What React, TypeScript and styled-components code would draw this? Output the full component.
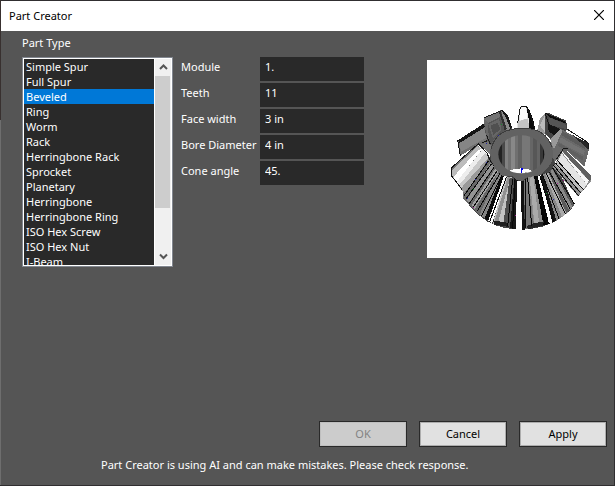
import React, { useRef, useState } from "react";
import styled, { createGlobalStyle } from "styled-components";

const GlobalStyle = createGlobalStyle`
  *, *::before, *::after { box-sizing: border-box; }
  body {
    margin: 0;
    font: 11px/15px "Noto Sans", "Open Sans", sans-serif;
    color: #fff;
    background: #333;
  }
  button, input, select { font: inherit; border-radius: 0; }
`;

const Desktop = styled.div`
  min-height: 100vh;
  display: flex;
  padding: 1px;
  background: linear-gradient(#38302f 120px, #6e6e6e 120px, #6e6e6e calc(100% - 1px), #2b2b2b calc(100% - 1px)) left / 1px 100% no-repeat, #302e30;
`;

const Window = styled.main`
  flex: 1;
  display: flex;
  flex-direction: column;
  background: #555;
`;

const TitleBar = styled.header`
  height: 30px;
  display: flex;
  align-items: center;
  justify-content: space-between;
  padding-left: 8px;
  background: #fff;
  color: #000;
`;

const Title = styled.h1`
  margin: 0;
  padding-bottom: 2px;
  font-size: 11px;
  font-weight: 400;
`;

const CloseButton = styled.button`
  width: 30px;
  height: 30px;
  display: grid;
  place-items: center;
  padding: 0 0 2px;
  border: 0;
  background: transparent;
`;

const Content = styled.section`
  flex: 1;
  display: flex;
  align-items: flex-start;
  gap: 8px;
  padding: 4px 0 0 21px;
`;

const TypePanel = styled.div`
  width: 151px;
  display: grid;
  gap: 7px;
`;

const ListFrame = styled.div`
  height: 210px;
  display: grid;
  grid-template-columns: 1fr 16px;
  column-gap: 1px;
  padding: 1px;
  border: 1px solid #828790;
  background: #fff;
`;

const TypeList = styled.select`
  width: 100%;
  height: 206px;
  padding: 0;
  border: 0;
  outline: 0;
  overflow-y: auto;
  scrollbar-width: none;
  background: #292929;
  color: #fff;
`;

const TypeOption = styled.option`
  height: 15px;
  min-height: 15px;
  padding: 0 2px;
  line-height: 15px;
  color: #fff;

  &:checked {
    background: #0078d7 linear-gradient(#0078d7, #0078d7);
    color: #fff;
  }
`;

const ScrollBar = styled.div`
  display: flex;
  flex-direction: column;
  background: #f0f0f0;
`;

const ScrollTrack = styled.div`
  flex: 1;
`;

const ScrollThumb = styled.div`
  width: 15px;
  height: 77%;
  background: #cdcdcd;
`;

const ScrollButton = styled.button`
  height: 17px;
  display: grid;
  place-items: center;
  padding: 0;
  border: 0;
  background: #f0f0f0;
`;

const Fields = styled.div`
  display: grid;
  grid-template-columns: 79px 104px;
  row-gap: 2px;
  margin-top: 22px;
`;

const FieldLabel = styled.label`
  padding-top: 2px;
  white-space: nowrap;
`;

const FieldInput = styled.input`
  width: 100%;
  height: 24px;
  padding: 0 5px 5px;
  border: 0;
  outline: 0;
  background: #292929;
  color: #fff;
`;

const Preview = styled.figure`
  flex: 0 0 187px;
  height: 198px;
  margin: 25px 0 0 auto;
  background: #fff;

  svg { display: block; }
`;

const Footer = styled.footer`
  display: grid;
  gap: 10px;
  padding-bottom: 13px;
`;

const Actions = styled.div`
  display: flex;
  justify-content: flex-end;
  gap: 12px;
  padding-right: 7px;
`;

const ActionButton = styled.button`
  width: 88px;
  height: 26px;
  padding: 0 0 1px;
  border: 1px solid #292929;
  background: #e1e1e1;
  box-shadow: inset 0 0 0 1px #adadad;
  color: #000;

  &:disabled {
    background: #ccc;
    box-shadow: inset 0 0 0 1px #bfbfbf;
    color: #838383;
  }
`;

const Notice = styled.p`
  margin: 0;
  padding-left: 100px;
`;

const partTypes = [
  "Simple Spur", "Full Spur", "Beveled", "Ring", "Worm", "Rack", "Herringbone Rack",
  "Sprocket", "Planetary", "Herringbone", "Herringbone Ring", "ISO Hex Screw",
  "ISO Hex Nut", "I-Beam", "Channel", "Angle", "Tube",
];

const fields = [
  { id: "module", label: "Module", value: "1." },
  { id: "teeth", label: "Teeth", value: "11" },
  { id: "face-width", label: "Face width", value: "3 in" },
  { id: "bore-diameter", label: "Bore Diameter", value: "4 in" },
  { id: "cone-angle", label: "Cone angle", value: "45." },
];

type Facet = [points: string, fill: string];

const backTeeth: Facet[] = [
  ["98,258 178,207 200,262 196,300 160,264 106,302", "#777"],
  ["103,262 177,218 184,248 108,290", "#858585"],
  ["98,256 178,205 179,217 104,264", "#151515"],
  ["106,302 108,292 160,262 190,254 192,262 164,268", "#707070"],
  ["176,188 230,165 246,178 262,222 225,244 198,272 187,256 180,228", "#555"],
  ["176,190 226,170 230,184 189,204 184,240", "#737373"],
  ["176,190 189,204 192,262 184,240", "#686868"],
  ["190,208 222,192 230,226 204,250", "#666"],
  ["196,213 217,203 226,222 206,240", "#505050"],
  ["229,168 240,172 258,222 242,226", "#8c8c8c"],
  ["228,166 233,164 250,188 261,220 256,221 240,182", "#181818"],
  ["222,172 228,172 246,222 239,225", "#303030"],
  ["277,208 284,163 290,153 305,153 316,180 318,222 276,224", "#e4e4e4"],
  ["286,164 292,155 303,156 307,190 284,197", "#fafafa"],
  ["280,199 307,191 315,221 278,223", "#c4c4c4"],
  ["303,153 314,166 327,202 330,223 313,221 311,190", "#090909"],
  ["337,226 344,192 362,174 371,182 372,244", "#999"],
  ["344,211 361,180 366,182 360,232", "#bbb"],
  ["361,173 371,174 424,197 426,226 408,232 384,260 360,236", "#454545"],
  ["364,175 421,199 422,205 373,187", "#0c0c0c"],
  ["371,187 421,207 424,222 374,210", "#555"],
  ["369,208 410,225 394,244 371,230", "#141414"],
  ["408,222 489,266 492,284 478,334 417,280 384,330 378,262", "#696969"],
  ["406,222 413,225 387,284 375,252", "#999"],
  ["412,229 484,272 479,282 408,240", "#5b5b5b"],
  ["407,247 480,288 476,300 401,261", "#737373"],
  ["401,263 476,306 472,316 400,273", "#606060"],
  ["443,240 488,264 491,283 483,278", "#262626"],
];

const frontFacets: Facet[] = [
  ["157,268 205,335 116,433 112,403 78,361 78,338", "#777"],
  ["158,274 172,281 88,378 80,362 83,343", "#bcbcbc"],
  ["160,284 171,283 94,382 85,366", "#fff"],
  ["172,283 182,294 103,399 94,382", "#ededed"],
  ["182,292 190,310 108,405 102,391", "#c8c8c8"],
  ["189,309 197,322 117,414 107,401", "#999"],
  ["190,312 240,363 169,485 115,430", "#686868"],
  ["196,324 206,335 132,444 125,435", "#949494"],
  ["211,341 220,350 149,462 140,451", "#a0a0a0"],
  ["218,355 234,365 180,490 164,479", "#858585"],
  ["230,361 239,363 191,498 179,490", "#0b0b0b"],
  ["237,363 246,365 202,504 190,497", "#fff"],
  ["243,364 268,369 252,516 203,506", "#c2c2c2"],
  ["248,367 256,367 218,508 207,505", "#909090"],
  ["254,369 269,370 263,520 234,514", "#4c4c4c"],
  ["268,370 280,377 277,524 255,519", "#171717"],
  ["275,378 291,378 291,524 274,523", "#fff"],
  ["287,377 297,378 299,524 291,524", "#111"],
  ["297,377 308,369 334,516 300,522", "#777"],
  ["308,367 331,360 364,508 328,518", "#8d8d8d"],
  ["314,369 325,365 343,510 329,512", "#aaa"],
  ["327,363 339,361 374,506 356,512", "#050505"],
  ["338,364 347,361 384,502 372,506", "#fff"],
  ["346,362 354,359 396,496 382,502", "#131313"],
  ["353,358 368,353 421,479 394,497", "#888"],
  ["361,358 371,353 428,473 411,487", "#aaa"],
  ["370,351 383,338 449,450 424,475", "#5a5a5a"],
  ["376,348 382,342 442,455 432,466", "#8a8a8a"],
  ["384,337 415,280 498,361 498,379 459,424", "#909090"],
  ["399,317 410,295 486,389 475,402", "#e4e4e4"],
  ["411,292 418,294 491,377 486,389", "#f7f7f7"],
  ["390,327 398,315 475,402 467,410", "#bcbcbc"],
  ["414,278 498,361 496,380 416,295", "#606060"],
  ["204,496 247,503 252,516 208,509", "#202020"],
  ["305,514 324,505 357,499 352,513 310,522", "#242424"],
];

const outerEdges = [
  "M98 256 106 302M100 258 178 207M177 188 232 166 248 184 260 218M184 239 196 268M187 257 171 264",
  "M160 266 80 338 80 363 111 403M160 266 186 294 196 318 228 357",
  "M395 312 416 280 428 280M426 222 489 263 490 281M361 175 371 208 406 224",
  "M278 203 286 157 291 153 304 153 317 181 328 218",
];

const toothEdges = [
  "M191 317 117 422M199 327 122 433M207 337 133 446M216 348 145 456M225 356 156 469M231 360 170 482M245 365 194 500",
  "M263 371 248 514M270 374 263 520M301 373 302 520M308 369 320 512",
  "M333 363 365 506M344 360 386 500M352 358 402 491M363 354 421 476M373 350 435 461M383 339 448 447",
  "M385 330 461 423M391 323 467 414M396 315 476 405",
];

const boreStripes: Facet[] = [
  ["219,238 230,238 230,360 219,360", "#222"],
  ["230,238 239,238 239,360 230,360", "#494949"],
  ["239,238 249,238 249,360 239,360", "#818181"],
  ["249,238 259,238 259,360 249,360", "#707070"],
  ["259,238 270,238 270,360 259,360", "#888"],
  ["270,238 280,238 280,360 270,360", "#707070"],
  ["280,238 291,238 291,360 280,360", "#626262"],
  ["291,238 315,238 315,360 291,360", "#777"],
  ["315,238 323,238 323,360 315,360", "#666"],
  ["323,238 335,238 335,360 323,360", "#575757"],
  ["335,238 345,238 345,360 335,360", "#646464"],
  ["345,238 353,238 353,360 345,360", "#383838"],
  ["353,238 359,238 359,360 353,360", "#151515"],
];

const FacetGroup = ({ items }: { items: Facet[] }) => (
  <>{items.map(([points, fill]) => <polygon key={points} points={points} fill={fill} />)}</>
);

const BevelGear = () => (
  <svg width="187" height="198" viewBox="6 15 561 594" role="img" aria-label="Bevel gear preview" shapeRendering="crispEdges">
    <defs>
      <clipPath id="gear-hole"><ellipse cx="289" cy="298" rx="69" ry="57" /></clipPath>
    </defs>
    <FacetGroup items={backTeeth} />
    <path d="M113 425C140 465 175 500 215 512C260 527 310 527 355 514C400 500 430 475 449 450L384 310 197 300Z" fill="#444" />
    <FacetGroup items={frontFacets} />
    {outerEdges.map((d) => <path key={d} d={d} fill="none" stroke="#161616" strokeWidth="3" />)}
    {toothEdges.map((d) => <path key={d} d={d} fill="none" stroke="#090909" strokeWidth="3" />)}
    <path d="M196 300C189 250 230 219 290 220S384 251 384 302C382 327 366 345 344 361L325 364 305 368 291 378 273 374 263 364 238 364C216 352 198 329 196 300Z" fill="#626262" />
    <path d="M199 282C207 241 240 221 290 220S368 238 380 275" fill="none" stroke="#3c3c3c" strokeWidth="3" />
    <g clipPath="url(#gear-hole)">
      <FacetGroup items={boreStripes} />
      <path d="M247 350Q288 330 329 350L320 360H255Z" fill="#fff" />
      <path d="M261 350h8v5h-8zM299 350h8v5h-8z" fill="#aaa" />
    </g>
    <path d="M288 338h5v7h-2v10h-3z" fill="#0000e6" />
    <path d="M183 265h3v3h-3zM182 321h3v3h-3zM150 372h3v3h-3zM126 430h3v3h-3zM384 432h3v3h-3zM220 239h3v3h-3z" fill="#22229d" />
    <path d="M229 207h3v3h-3zM145 403h3v3h-3zM364 415h3v3h-3z" fill="#168b2b" />
    <path d="M144 456h3v3h-3zM269 481h3v3h-3zM397 383h3v3h-3zM413 374h3v3h-3z" fill="#a0208f" />
  </svg>
);

const Chevron = ({ up = false }: { up?: boolean }) => (
  <svg width="9" height="7" viewBox="0 0 9 7" aria-hidden="true">
    <path d={up ? "M1 5 4.5 1.5 8 5" : "M1 1.5 4.5 5 8 1.5"} fill="none" stroke="#555" strokeWidth="2" />
  </svg>
);

export default function App() {
  const listRef = useRef<HTMLSelectElement>(null);
  const [partType, setPartType] = useState("Beveled");
  const scroll = (amount: number) => listRef.current?.scrollBy(0, amount);

  return (
    <>
      <GlobalStyle />
      <Desktop>
        <Window>
          <TitleBar>
            <Title>Part Creator</Title>
            <CloseButton aria-label="Close">
              <svg width="10" height="10" viewBox="0 0 10 10" aria-hidden="true">
                <path d="m0 0 10 10M10 0 0 10" stroke="#000" strokeWidth="1.2" />
              </svg>
            </CloseButton>
          </TitleBar>
          <Content>
            <TypePanel>
              <label htmlFor="part-type">Part Type</label>
              <ListFrame>
                <TypeList id="part-type" ref={listRef} size={13} value={partType} onChange={(e) => setPartType(e.target.value)}>
                  {partTypes.map((type) => <TypeOption key={type}>{type}</TypeOption>)}
                </TypeList>
                <ScrollBar>
                  <ScrollButton aria-label="Scroll up" onClick={() => scroll(-15)}><Chevron up /></ScrollButton>
                  <ScrollTrack><ScrollThumb /></ScrollTrack>
                  <ScrollButton aria-label="Scroll down" onClick={() => scroll(15)}><Chevron /></ScrollButton>
                </ScrollBar>
              </ListFrame>
            </TypePanel>
            <Fields>
              {fields.map(({ id, label, value }) => (
                <React.Fragment key={id}>
                  <FieldLabel htmlFor={id}>{label}</FieldLabel>
                  <FieldInput id={id} defaultValue={value} />
                </React.Fragment>
              ))}
            </Fields>
            <Preview><BevelGear /></Preview>
          </Content>
          <Footer>
            <Actions>
              <ActionButton disabled>OK</ActionButton>
              <ActionButton>Cancel</ActionButton>
              <ActionButton>Apply</ActionButton>
            </Actions>
            <Notice>Part Creator is using AI and can make mistakes. Please check response.</Notice>
          </Footer>
        </Window>
      </Desktop>
    </>
  );
}
